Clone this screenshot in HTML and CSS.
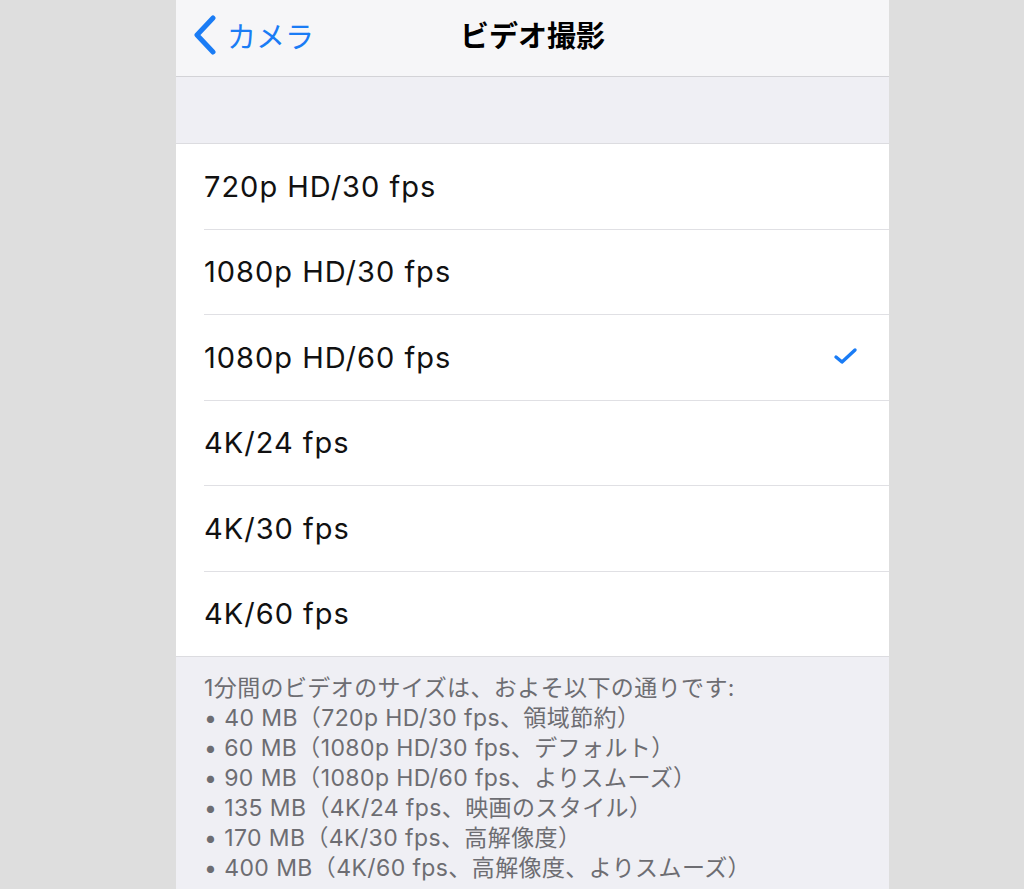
FILE: index.html
```html
<!DOCTYPE html>
<html lang="ja">
<head>
    <meta charset="UTF-8">
    <meta name="viewport" content="width=device-width, initial-scale=1.0">
    <title>ビデオ撮影</title>
    <link rel="stylesheet" href="styles.css">
</head>
<body>
    <div class="screen">
        <!-- Navigation bar -->
        <div class="navbar">
            <div class="back">
                <svg class="chevron" width="26" height="40" viewBox="0 0 26 40">
                    <polyline points="21,3 5,20 21,37" fill="none" stroke="#1a7cf5" stroke-width="5" stroke-linecap="round" stroke-linejoin="round"/>
                </svg>
                <span>カメラ</span>
            </div>
            <div class="title">ビデオ撮影</div>
        </div>

        <div class="spacer"></div>

        <!-- Resolution options -->
        <div class="list">
            <div class="row"><span>720p HD/30 fps</span></div>
            <div class="row"><span>1080p HD/30 fps</span></div>
            <div class="row selected">
                <span>1080p HD/60 fps</span>
                <svg class="check" width="26" height="20" viewBox="0 0 26 20">
                    <polyline points="3,10 9,15 22,3" fill="none" stroke="#1a7cf5" stroke-width="3.4" stroke-linecap="round" stroke-linejoin="round"/>
                </svg>
            </div>
            <div class="row"><span>4K/24 fps</span></div>
            <div class="row"><span>4K/30 fps</span></div>
            <div class="row"><span>4K/60 fps</span></div>
        </div>

        <div class="footer">
            1分間のビデオのサイズは、およそ以下の通りです:<br>
            • 40 MB（720p HD/30 fps、領域節約）<br>
            • 60 MB（1080p HD/30 fps、デフォルト）<br>
            • 90 MB（1080p HD/60 fps、よりスムーズ）<br>
            • 135 MB（4K/24 fps、映画のスタイル）<br>
            • 170 MB（4K/30 fps、高解像度）<br>
            • 400 MB（4K/60 fps、高解像度、よりスムーズ）
        </div>
    </div>
</body>
</html>
```

FILE: styles.css
```css
html, body {
    height: 100%;
}

body {
    margin: 0;
    background-color: #dedede;
    font-family: Inter, "Noto Sans CJK JP", sans-serif;
    overflow: hidden;
}

.screen {
    width: 713px;
    margin-left: 176px;
    min-height: 100%;
    background-color: #efeff4;
}

.navbar {
    position: relative;
    height: 76px;
    background-color: #f6f6f8;
    border-bottom: 1px solid #d3d3d7;
    display: flex;
    align-items: center;
    justify-content: center;
}

.back {
    position: absolute;
    left: 16px;
    top: 14px;
    display: flex;
    align-items: center;
    color: #1a7cf5;
    font-size: 29px;
    font-family: "Noto Sans CJK JP", sans-serif;
}

.chevron {
    margin-right: 9px;
}

.title {
    font-size: 29px;
    font-weight: bold;
    color: #000;
    font-family: "Noto Sans CJK JP", sans-serif;
    margin-top: -9px;
}

.spacer {
    height: 66px;
    border-bottom: 1px solid #dcdce0;
}

.list {
    background-color: #fff;
    border-bottom: 1px solid #dcdce0;
}

.row {
    height: 84.5px;
    margin-left: 28px;
    padding-right: 30px;
    display: flex;
    align-items: center;
    justify-content: space-between;
    border-bottom: 1px solid #e0e0e4;
    font-size: 29px;
    letter-spacing: 1px;
    color: #111;
}

.row:last-child {
    border-bottom: none;
}

.footer {
    padding: 16px 28px 0;
    font-size: 23px;
    letter-spacing: 0.4px;
    line-height: 30px;
    color: #6d6d72;
}
```
